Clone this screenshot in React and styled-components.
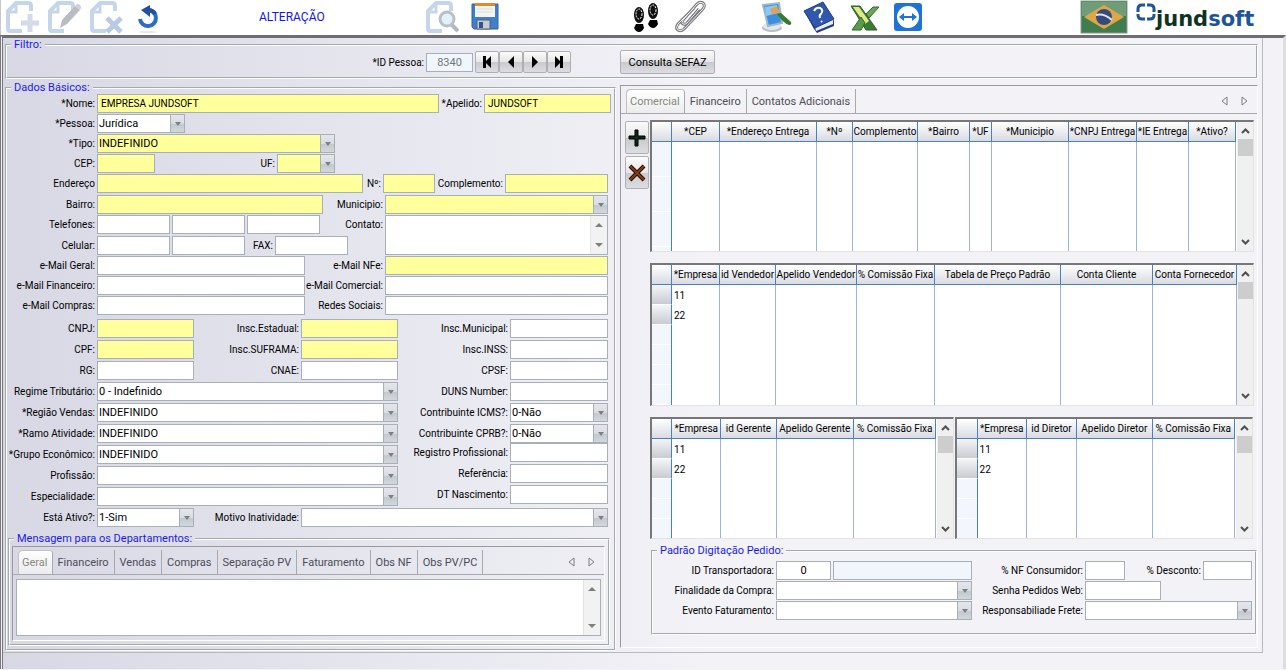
import React from "react";
import styled, { createGlobalStyle } from "styled-components";

const FONT = `Roboto, "Liberation Sans", sans-serif`;
const SMALL = 10;
const LARGE = 11;

const App = () => {
    return (
        <>
            <GlobalStyle />
            <Toolbar />
            <Workspace>
                <Sheet>
                    <FilterBar />
                    <Columns>
                        <BasicData />
                        <SidePanel />
                    </Columns>
                </Sheet>
            </Workspace>
        </>
    );
};

export default App;

/* toolbar */

const Toolbar = () => (
    <ToolbarContainer>
        <IconBtn aria-label="Novo" $ml={5}>
            <PageIcon>
                <path d="M24 14v18M15 23h18" stroke="#d3dae8" strokeWidth="5" />
            </PageIcon>
        </IconBtn>
        <IconBtn aria-label="Editar" $ml={9}>
            <PageIcon>
                <path d="M12 28l2-8L27 6l5 4-13 14z" fill="#b9bcc2" />
                <path d="M27 6l2-2q4 0 4 4l-1 2z" fill="#cdd0d5" />
            </PageIcon>
        </IconBtn>
        <IconBtn aria-label="Excluir" $ml={9}>
            <PageIcon>
                <path d="M17 18l14 14M31 18L17 32" stroke="#b9cbe4" strokeWidth="5" />
            </PageIcon>
        </IconBtn>
        <IconBtn aria-label="Desfazer" $ml={8}>
            <svg width="33" height="34" viewBox="0 0 33 34">
                <ellipse cx="17" cy="32" rx="9" ry="1" fill="#e6e6e6" />
                <path
                    d="M17 10a8 8 0 1 1-8 9"
                    fill="none"
                    stroke="#2a6cc9"
                    strokeWidth="4"
                />
                <path d="M10 10l9-5v12z" fill="#234fa3" />
                <path d="M17 10q5 0 7 4" fill="none" stroke="#234fa3" strokeWidth="4" />
            </svg>
        </IconBtn>
        <Mode>ALTERAÇÃO</Mode>
        <IconBtn aria-label="Pesquisar" $ml={103}>
            <PageIcon>
                <circle cx="21" cy="19" r="7" fill="#e3f1fa" stroke="#b9c0c8" strokeWidth="3" />
                <path d="M26 25l6 6" stroke="#b5b8bf" strokeWidth="4" />
            </PageIcon>
        </IconBtn>
        <IconBtn aria-label="Salvar" $ml={9}>
            <svg width="33" height="34" viewBox="0 0 33 34">
                <path d="M4 4h26v25H6l-2-2z" fill="#3f7fcd" stroke="#2c62ab" />
                <path d="M7 3h20v3H7z" fill="#e08a2c" />
                <path d="M7 6h20v11H7z" fill="#f4f4f2" />
                <path d="M9 9h16M9 12h16" stroke="#dcdcda" />
                <path d="M9 20h13v9H9z" fill="#c9ccd2" stroke="#56607a" />
                <path d="M11 22h4v6h-4z" fill="#33518c" />
            </svg>
        </IconBtn>
        <IconBtn aria-label="Seguir" $ml={131}>
            <svg width="33" height="34" viewBox="0 0 33 34">
                <Foot />
                <g transform="translate(14 -4)">
                    <Foot />
                </g>
            </svg>
        </IconBtn>
        <IconBtn aria-label="Anexos" $ml={8}>
            <svg width="33" height="34" viewBox="0 0 33 34" fill="none">
                <path
                    d="M21 8L5 24q-3 4 0 6 3 2 6-1L29 10q4-4 1-7-3-2-6 1L10 20q-2 3 0 4 2 1 4-1L26 9"
                    stroke="#77797d"
                    strokeWidth="3"
                />
                <path
                    d="M21 8L5 24q-3 4 0 6 3 2 6-1L29 10q4-4 1-7-3-2-6 1L10 20q-2 3 0 4 2 1 4-1L26 9"
                    stroke="#f2f2f4"
                />
            </svg>
        </IconBtn>
        <IconBtn aria-label="Aparência" $ml={54}>
            <svg width="33" height="34" viewBox="0 0 33 34">
                <ellipse cx="12" cy="28" rx="10" ry="4" fill="#b9bfc6" />
                <ellipse cx="12" cy="26" rx="9" ry="4" fill="#e3e7ea" />
                <path d="M3 5l16-2 3 20-14 3z" fill="#3d8fdc" stroke="#9cb8cf" strokeWidth="2" />
                <path d="M5 7l12-2 1 8-12 3z" fill="#8cc8f4" />
                <path d="M10 9l7-3 3 7-8 1z" fill="#e0a457" />
                <path d="M17 14l4-1 10 9q1 3-2 3-6-2-12-11z" fill="#3a7a2d" />
            </svg>
        </IconBtn>
        <IconBtn aria-label="Ajuda" $ml={10}>
            <svg width="33" height="34" viewBox="0 0 33 34">
                <path d="M1 11l10 18 3 4 17-7v-6L12 27z" fill="#23407f" />
                <path d="M12 27l18-7v4l-17 7z" fill="#e8ebf2" />
                <path d="M1 11L20 2l11 17-19 9z" fill="#2f57ad" stroke="#203c7c" />
                <path
                    d="M11 11q2-4 6-3 4 2 1 6-2 1-1 4M18 21l1 1"
                    fill="none"
                    stroke="#fff"
                    strokeWidth="2"
                />
            </svg>
        </IconBtn>
        <IconBtn aria-label="Exportar para Excel" $ml={14}>
            <svg width="33" height="34" viewBox="0 0 33 34">
                <path d="M16 14l7-7h6L19 18z" fill="#6aa554" stroke="#2e6b2b" />
                <path d="M1 6h9l17 24H16z" fill="#3b7c34" stroke="#2b5f28" />
                <path d="M3 7h6l10 14-4 3z" fill="#dfe98a" />
                <path d="M11 17L2 30h9l4-7z" fill="#5b9a49" stroke="#2e6b2b" />
            </svg>
        </IconBtn>
        <IconBtn aria-label="Suporte remoto" $ml={8}>
            <svg width="33" height="34" viewBox="0 0 33 34">
                <rect x="3" y="3" width="28" height="28" rx="3" fill="#1f72d6" />
                <circle cx="17" cy="17" r="11" fill="#fff" />
                <path d="M8 17l5-4v3h8v-3l5 4-5 4v-3h-8v3z" fill="#1f72d6" />
            </svg>
        </IconBtn>
        <Brand>
            <svg width="48" height="34" viewBox="0 0 48 34" role="img" aria-label="Brasil">
                <rect x="1" y="1" width="46" height="32" fill="#3f7d4f" stroke="#8d9a8f" />
                <path d="M2 2h44v14H2z" fill="#6f9d78" />
                <path d="M4 17L24 5l20 12-20 12z" fill="#e2a545" />
                <circle cx="24" cy="17" r="8" fill="#35497f" />
                <path d="M16 15q8-2 16 5" fill="none" stroke="#dfe4ea" strokeWidth="2" />
            </svg>
            <Logo>
                <svg width="20" height="26" viewBox="0 0 20 26" fill="none" stroke="#1f5597" strokeWidth="3">
                    <path d="M9 5H6Q2 5 2 9v3M11 5h3q4 0 4 4v3M2 14v1q0 4 4 4h3M18 14v1q0 4-4 4h-3" />
                </svg>
                <LogoText>
                    jund<b>soft</b>
                </LogoText>
            </Logo>
        </Brand>
    </ToolbarContainer>
);

const PageIcon = ({ children }) => (
    <svg width="33" height="34" viewBox="0 0 33 34" fill="none">
        <path
            d="M16 31H4q-2 0-2-2V11l8-8h12q3 0 3 3v5"
            stroke="#c5d5ea"
            strokeWidth="4"
        />
        <path d="M2 12h8V3" stroke="#c5d5ea" strokeWidth="3" />
        {children}
    </svg>
);

const Foot = () => (
    <g>
        <ellipse cx="7" cy="15" rx="5" ry="8" fill="#111" />
        <ellipse cx="7" cy="14" rx="3" ry="5" fill="none" stroke="#fff" strokeDasharray="2 1" />
        <path d="M4 24h7l1 4q-2 4-5 4t-5-4z" fill="#000" />
    </g>
);

/* filter */

const navIcons = [
    ["Primeiro", "M4 2h3v5l5-5v12L7 9v5H4z"],
    ["Anterior", "M11 2v12L5 8z"],
    ["Próximo", "M5 2v12l6-6z"],
    ["Último", "M12 2H9v5L4 2v12l5-5v5h3z"],
];

const FilterBar = () => (
    <Fieldset>
        <Legend>Filtro:</Legend>
        <FilterRow>
            <Label htmlFor="idPessoa" $w={417}>
                *ID Pessoa:
            </Label>
            <Input id="idPessoa" $w={47} $center $readonly readOnly defaultValue="8340" />
            <NavGroup>
                {navIcons.map(([name, d]) => (
                    <GreyBtn key={name} aria-label={name} $w={24} $h={22}>
                        <svg width="16" height="16" viewBox="0 0 16 16">
                            <path d={d} />
                        </svg>
                    </GreyBtn>
                ))}
            </NavGroup>
            <SefazBtn>Consulta SEFAZ</SefazBtn>
        </FilterRow>
    </Fieldset>
);

/* form parts */

const Text = ({ id, label, lw = 88, ...rest }) => (
    <>
        <Label htmlFor={id} $w={lw}>
            {label}
        </Label>
        <Input id={id} {...rest} />
    </>
);

const Drop = ({ id, label, lw = 88, value = "", w, yellow, grow }) => (
    <>
        <Label htmlFor={id} $w={lw}>
            {label}
        </Label>
        <SelectBox $w={w} $yellow={yellow} $grow={grow}>
            <Select id={id} defaultValue={value}>
                <option value={value}>{value}</option>
            </Select>
            <Arrow aria-hidden="true">
                <svg width="6" height="4" viewBox="0 0 6 4">
                    <path d="M0 0h6L3 4z" fill="#7b7f86" />
                </svg>
            </Arrow>
        </SelectBox>
    </>
);

const Area = ({ name, ...rest }) => (
    <AreaBox>
        <TextArea {...rest} aria-label={name} />
        <AreaScroll aria-hidden="true">
            <svg width="8" height="4" viewBox="0 0 8 4">
                <path d="M0 4h8L4 0z" fill="#7f7f7f" />
            </svg>
            <svg width="8" height="4" viewBox="0 0 8 4">
                <path d="M0 0h8L4 4z" fill="#7f7f7f" />
            </svg>
        </AreaScroll>
    </AreaBox>
);

const BasicData = () => (
    <Fieldset>
        <Legend>Dados Básicos:</Legend>
        <Form>
            <Rows $gap={1}>
                <Row $pr={3}>
                    <Text id="nome" label="*Nome:" $w={342} $yellow $grow defaultValue="EMPRESA JUNDSOFT" />
                    <Text id="apelido" label="*Apelido:" lw={41} $w={127} $yellow defaultValue="JUNDSOFT" />
                </Row>
                <Row>
                    <Drop id="pessoa" label="*Pessoa:" value="Jurídica" w={88} />
                </Row>
                <Row>
                    <Drop id="tipo" label="*Tipo:" value="INDEFINIDO" w={238} yellow />
                </Row>
                <Row>
                    <Text id="cep" label="CEP:" $w={58} $yellow />
                    <Drop id="uf" label="UF:" lw={118} w={58} yellow />
                </Row>
            </Rows>
            <Rows $gap={2} $mt={1}>
                <Row $pr={6}>
                    <Text id="endereco" label="Endereço" $w={266} $yellow $grow />
                    <Text id="numero" label="Nº:" lw={16} $w={52} $yellow />
                    <Text id="complemento" label="Complemento:" lw={66} $w={103} $yellow />
                </Row>
                <Row $pr={6}>
                    <Text id="bairro" label="Bairro:" $w={226} $yellow />
                    <Drop id="municipio" label="Municipio:" lw={58} w={223} yellow grow />
                </Row>
            </Rows>
            <Contact>
                <Rows $gap={2}>
                    <Row>
                        <Text id="tel1" label="Telefones:" $w={73} />
                        <Input aria-label="Telefone 2" $w={73} />
                        <Input aria-label="Telefone 3" $w={73} />
                    </Row>
                    <Row>
                        <Text id="cel1" label="Celular:" $w={73} />
                        <Input aria-label="Celular 2" $w={73} />
                        <Text id="fax" label="FAX:" lw={26} $w={73} />
                    </Row>
                </Rows>
                <Label htmlFor="contato">Contato:</Label>
                <Area id="contato" />
            </Contact>
            <Rows $gap={1} $mt={1}>
                <Row $pr={6}>
                    <Text id="mailGeral" label="e-Mail Geral:" $w={208} />
                    <Text id="mailNfe" label="e-Mail NFe:" lw={76} $w={222} $yellow $grow />
                </Row>
                <Row $pr={6}>
                    <Text id="mailFin" label="e-Mail Financeiro:" $w={208} />
                    <Text id="mailCom" label="e-Mail Comercial:" lw={76} $w={222} $grow />
                </Row>
                <Row $pr={6}>
                    <Text id="mailCompras" label="e-Mail Compras:" $w={208} />
                    <Text id="redes" label="Redes Sociais:" lw={76} $w={222} $grow />
                </Row>
            </Rows>
            <Documents>
                <Rows $gap={2}>
                    <Row>
                        <Text id="cnpj" label="CNPJ:" $w={97} $yellow />
                        <Text id="ie" label="Insc.Estadual:" lw={103} $w={97} $yellow />
                    </Row>
                    <Row>
                        <Text id="cpf" label="CPF:" $w={97} $yellow />
                        <Text id="suframa" label="Insc.SUFRAMA:" lw={103} $w={97} $yellow />
                    </Row>
                    <Row>
                        <Text id="rg" label="RG:" $w={97} />
                        <Text id="cnae" label="CNAE:" lw={103} $w={97} />
                    </Row>
                    <Row>
                        <Drop id="regime" label="Regime Tributário:" value="0 - Indefinido" w={301} />
                    </Row>
                    <Row>
                        <Drop id="regiao" label="*Região Vendas:" value="INDEFINIDO" w={301} />
                    </Row>
                    <Row>
                        <Drop id="ramo" label="*Ramo Atividade:" value="INDEFINIDO" w={301} />
                    </Row>
                    <Row>
                        <Drop id="grupo" label="*Grupo Econômico:" value="INDEFINIDO" w={301} />
                    </Row>
                    <Row>
                        <Drop id="profissao" label="Profissão:" w={301} />
                    </Row>
                    <Row>
                        <Drop id="especialidade" label="Especialidade:" w={301} />
                    </Row>
                </Rows>
                <div>
                    <Rows $gap={2}>
                        <Row $pr={6}>
                            <Text id="im" label="Insc.Municipal:" lw={108} $w={97} $grow />
                        </Row>
                        <Row $pr={6}>
                            <Text id="inss" label="Insc.INSS:" lw={108} $w={97} $grow />
                        </Row>
                        <Row $pr={6}>
                            <Text id="cpsf" label="CPSF:" lw={108} $w={97} $grow />
                        </Row>
                        <Row $pr={6}>
                            <Text id="duns" label="DUNS Number:" lw={108} $w={97} $grow />
                        </Row>
                        <Row $pr={6}>
                            <Drop id="icms" label="Contribuinte ICMS?:" value="0-Não" lw={108} w={97} grow />
                        </Row>
                        <Row $pr={6}>
                            <Drop id="cprb" label="Contribuinte CPRB?:" value="0-Não" lw={108} w={97} grow />
                        </Row>
                    </Rows>
                    <Rows $gap={2}>
                        <Row $pr={6}>
                            <Text id="registro" label="Registro Profissional:" lw={108} $w={97} $grow />
                        </Row>
                        <Row $pr={6}>
                            <Text id="referencia" label="Referência:" lw={108} $w={97} $grow />
                        </Row>
                        <Row $pr={6}>
                            <Text id="nascimento" label="DT Nascimento:" lw={108} $w={97} $grow />
                        </Row>
                    </Rows>
                </div>
            </Documents>
            <Rows $gap={2} $mt={2}>
                <Row $pr={6}>
                    <Drop id="ativo" label="Está Ativo?:" value="1-Sim" w={97} />
                    <Drop id="motivo" label="Motivo Inatividade:" lw={103} w={306} grow />
                </Row>
            </Rows>
        </Form>
        <Messages>
            <Legend>Mensagem para os Departamentos:</Legend>
            <TabPanel>
                <TabStrip
                    tabs={[
                        "Geral",
                        "Financeiro",
                        "Vendas",
                        "Compras",
                        "Separação PV",
                        "Faturamento",
                        "Obs NF",
                        "Obs PV/PC",
                    ]}
                />
                <MessageBody>
                    <Area name="Mensagem" />
                </MessageBody>
            </TabPanel>
        </Messages>
    </Fieldset>
);

const TabStrip = ({ tabs }) => (
    <Tabs role="tablist">
        {tabs.map((tab, i) => (
            <Tab key={tab} role="tab" aria-selected={i === 0} $active={i === 0}>
                {tab}
            </Tab>
        ))}
        <TabArrows>
            <ArrowBtn aria-label="Aba anterior">
                <svg width="7" height="10" viewBox="0 0 7 10">
                    <path d="M6 1v8L1 5z" fill="none" stroke="#7d7d80" />
                </svg>
            </ArrowBtn>
            <ArrowBtn aria-label="Próxima aba">
                <svg width="7" height="10" viewBox="0 0 7 10">
                    <path d="M1 1v8l5-4z" fill="none" stroke="#7d7d80" />
                </svg>
            </ArrowBtn>
        </TabArrows>
    </Tabs>
);

/* side panel */

const deliveryCols = [
    ["*CEP", 48],
    ["*Endereço Entrega", 97],
    ["*Nº", 36],
    ["Complemento", 65],
    ["*Bairro", 52],
    ["*UF", 22],
    ["*Municipio", 77],
    ["*CNPJ Entrega", 68],
    ["*IE Entrega", 52],
    ["*Ativo?", 47],
];

const sellerCols = [
    ["*Empresa", 48],
    ["id Vendedor", 56],
    ["Apelido Vendedor", 81],
    ["% Comissão Fixa", 78],
    ["Tabela de Preço Padrão", 126],
    ["Conta Cliente", 92],
    ["Conta Fornecedor", 84],
];

const managerCols = [
    ["*Empresa", 49],
    ["id Gerente", 55],
    ["Apelido Gerente", 77],
    ["% Comissão Fixa", 82],
];

const directorCols = [
    ["*Empresa", 49],
    ["id Diretor", 50],
    ["Apelido Diretor", 75],
    ["% Comissão Fixa", 82],
];

const DataGrid = ({ cols, rows = [], height, pitch = 20, grow }) => (
    <GridFrame $h={height} $grow={grow}>
        <TableWrap>
            <Table>
                <colgroup>
                    <col width={20} />
                    {cols.map(([name, w]) => (
                        <col key={name} width={w} />
                    ))}
                </colgroup>
                <thead>
                    <tr>
                        <HeadCell />
                        {cols.map(([name]) => (
                            <HeadCell key={name}>{name}</HeadCell>
                        ))}
                    </tr>
                </thead>
                <tbody>
                    {rows.map((value) => (
                        <tr key={value}>
                            <RowHandle />
                            {cols.map(([name], i) => (
                                <Cell key={name}>{i === 0 ? value : ""}</Cell>
                            ))}
                        </tr>
                    ))}
                    <FillRow>
                        <FillHandle $pitch={pitch} />
                        {cols.map(([name]) => (
                            <Cell key={name} />
                        ))}
                    </FillRow>
                </tbody>
            </Table>
        </TableWrap>
        <ScrollBar aria-hidden="true">
            <svg width="9" height="6" viewBox="0 0 9 6">
                <path d="M1 5l3.500-3.500L8 5" fill="none" stroke="#505050" strokeWidth="2" />
            </svg>
            <Thumb />
            <svg width="9" height="6" viewBox="0 0 9 6">
                <path d="M1 1l3.500 3.500L8 1" fill="none" stroke="#505050" strokeWidth="2" />
            </svg>
        </ScrollBar>
    </GridFrame>
);

const SidePanel = () => (
    <SidePanelContainer>
        <TabStrip tabs={["Comercial", "Financeiro", "Contatos Adicionais"]} />
        <SideBody>
            <SideButtons>
                <GreyBtn aria-label="Adicionar" $w={24} $h={33}>
                    <svg width="18" height="18" viewBox="0 0 18 18">
                        <path d="M7 1h3v6h7v3h-7v7H7v-7H1V7h6z" fill="#0d2a16" stroke="#000" />
                    </svg>
                </GreyBtn>
                <GreyBtn aria-label="Remover" $w={24} $h={33}>
                    <svg width="18" height="18" viewBox="0 0 18 18">
                        <path d="M2 2l14 14M16 2L2 16" stroke="#1a0d06" strokeWidth="4" />
                        <path d="M2 2l14 14M16 2L2 16" stroke="#8a3a0c" strokeWidth="2" />
                    </svg>
                </GreyBtn>
            </SideButtons>
            <GridStack>
                <DataGrid cols={deliveryCols} height={132} pitch={35} />
                <DataGrid cols={sellerCols} rows={["11", "22"]} height={143} />
                <GridPair>
                    <DataGrid cols={managerCols} rows={["11", "22"]} height={122} grow={304} />
                    <DataGrid cols={directorCols} rows={["11", "22"]} height={122} grow={297} />
                </GridPair>
            </GridStack>
        </SideBody>
        <OrderDefaults />
    </SidePanelContainer>
);

const OrderDefaults = () => (
    <OrderFieldset>
        <Legend>Padrão Digitação Pedido:</Legend>
        <OrderRows>
            <Row $pr={3}>
                <Text id="transportadora" label="ID Transportadora:" lw={121} $w={55} $center defaultValue="0" />
                <Input aria-label="Transportadora" $w={139} $readonly readOnly />
                <Text id="nfConsumidor" label="% NF Consumidor:" lw={109} $w={40} />
                <Text id="desconto" label="% Desconto:" lw={74} $w={48} $grow />
            </Row>
            <Row $pr={3}>
                <Drop id="finalidade" label="Finalidade da Compra:" lw={121} w={196} />
                <Text id="senha" label="Senha Pedidos Web:" lw={109} $w={76} />
            </Row>
            <Row $pr={3}>
                <Drop id="evento" label="Evento Faturamento:" lw={121} w={196} />
                <Drop id="frete" label="Responsabiliade Frete:" lw={109} w={164} grow />
            </Row>
        </OrderRows>
    </OrderFieldset>
);

/* styles */

const GlobalStyle = createGlobalStyle`
    * {
        box-sizing: border-box;
    }
    body {
        margin: 0;
        font-family: ${FONT};
        font-size: ${SMALL}px;
        color: #000;
        background: #f2f2f7;
    }
    button, input, select, textarea {
        font-family: inherit;
    }
    svg {
        display: block;
    }
`;

const ToolbarContainer = styled.header`
    height: 35px;
    display: flex;
    align-items: flex-start;
    background: #fff;
    border-left: 1px solid #c8c8c8;
`;

const IconBtn = styled.button`
    margin: 0 0 0 ${({ $ml }) => $ml}px;
    padding: 0;
    border: none;
    background: none;
    flex-shrink: 0;
`;

const Mode = styled.span`
    width: 64px;
    margin-left: 95px;
    line-height: 34px;
    font-size: 12px;
    white-space: nowrap;
    color: #1414f0;
`;

const Brand = styled.div`
    display: flex;
    gap: 8px;
    margin-left: auto;
    margin-right: 30px;
`;

const Logo = styled.div`
    display: flex;
`;

const LogoText = styled.span`
    width: 100px;
    font-family: "DejaVu Sans", sans-serif;
    font-weight: bold;
    font-size: 21px;
    line-height: 38px;
    color: #0d3420;

    & b {
        color: #1f5597;
    }
`;

const Workspace = styled.main`
    min-height: calc(100vh - 36px);
    padding-right: 20px;
    border-top: 3px solid #6e6e70;
    border-left: 3px double #77777b;
    border-right: 3px solid #dedee2;
    background: linear-gradient(90deg, #d8d8e5, #f2f2f7 55%);
`;

const Sheet = styled.div`
    padding: 2px 4px 1px 2px;
    border-right: 1px solid #b9b9bd;
    border-bottom: 1px solid #b9b9bd;
`;

const Fieldset = styled.fieldset`
    min-width: 0;
    margin: 0;
    padding: 0;
    border: 2px groove #f8fdfe;
`;

const Legend = styled.legend`
    margin-left: 4px;
    padding: 0 3px;
    line-height: 10px;
    font-size: ${LARGE}px;
    color: #1a1af0;
`;

const FilterRow = styled.div`
    height: 27px;
    display: flex;
    align-items: center;
    gap: 2px;
    padding-bottom: 3px;
`;

const NavGroup = styled.div`
    display: flex;
`;

const GreyBtn = styled.button`
    width: ${({ $w }) => $w}px;
    height: ${({ $h }) => $h}px;
    display: flex;
    align-items: center;
    justify-content: center;
    padding: 0;
    border: 1px solid #b0b0b4;
    border-radius: 2px;
    background: linear-gradient(#fbfbfb, #e6e6e8 50%, #c9cacd 51%, #dcdde0);
`;

const SefazBtn = styled(GreyBtn)`
    width: 95px;
    height: 24px;
    margin-left: 47px;
    font-size: ${LARGE}px;
    white-space: nowrap;
`;

const Columns = styled.div`
    display: grid;
    grid-template-columns: minmax(0, 611fr) minmax(0, 638fr);
    gap: 4px;
    margin-top: 4px;
`;

const Form = styled.div`
    padding-top: 1px;
`;

const Rows = styled.div`
    display: flex;
    flex-direction: column;
    gap: ${({ $gap }) => $gap}px;
    margin-top: ${({ $mt = 0 }) => $mt}px;
`;

const Row = styled.div`
    height: 19px;
    display: flex;
    align-items: center;
    gap: 2px;
    padding-right: ${({ $pr = 0 }) => $pr}px;
`;

const Label = styled.label`
    flex-shrink: 0;
    width: ${({ $w }) => ($w ? `${$w}px` : "auto")};
    display: flex;
    justify-content: flex-end;
    line-height: 19px;
    font-size: ${SMALL}px;
    white-space: nowrap;
`;

const fieldColor = ({ $yellow, $readonly }) =>
    $yellow ? "#ffff9c" : $readonly ? "#f1f5fc" : "#fff";

const Input = styled.input`
    flex: ${({ $grow }) => ($grow ? 1 : 0)} 1 ${({ $w }) => $w}px;
    width: ${({ $w }) => $w}px;
    min-width: 0;
    height: 19px;
    padding: 0 3px;
    border: 1px solid #a7afb8;
    border-radius: 0;
    background: ${fieldColor};
    font-size: ${({ $center }) => ($center ? LARGE : SMALL)}px;
    text-align: ${({ $center }) => ($center ? "center" : "left")};
    color: ${({ $readonly }) => ($readonly ? "#6f7a78" : "#000")};
`;

const SelectBox = styled.div`
    position: relative;
    flex: ${({ $grow }) => ($grow ? 1 : 0)} 1 ${({ $w }) => $w}px;
    min-width: 0;
    height: 19px;
    border: 1px solid #a7afb8;
    background: ${fieldColor};
`;

const Select = styled.select`
    appearance: none;
    display: block;
    width: 100%;
    height: 17px;
    padding: 0 14px 0 1px;
    border: none;
    background: none;
    font-size: ${LARGE}px;
    color: #000;
`;

const Arrow = styled.span`
    position: absolute;
    top: 0;
    right: 0;
    bottom: 0;
    width: 14px;
    display: flex;
    align-items: center;
    justify-content: center;
    border-left: 1px solid #a7afb8;
    background: linear-gradient(#e4e6ea, #d9dce1 50%, #c3c7cd 51%, #d2d8da);
    pointer-events: none;
`;

const Contact = styled.div`
    display: grid;
    grid-template-columns: 341px 33px minmax(0, 1fr);
    gap: 2px;
    margin-top: 1px;
    padding-right: 6px;
`;

const AreaBox = styled.div`
    display: flex;
    height: 100%;
    border: 1px solid #a7afb8;
    background: #fff;
`;

const TextArea = styled.textarea`
    flex: 1;
    min-width: 0;
    height: 100%;
    padding: 2px;
    border: none;
    background: none;
    resize: none;
    overflow: hidden;
    font-size: ${LARGE}px;
`;

const AreaScroll = styled.div`
    width: 17px;
    display: flex;
    flex-direction: column;
    align-items: center;
    justify-content: space-between;
    padding: 7px 0;
    border-left: 1px solid #e4e4e4;
    background: #f2f2f2;
`;

const Documents = styled.div`
    display: grid;
    grid-template-columns: 391px minmax(0, 1fr);
    gap: 2px;
    margin-top: 4px;
`;

const Messages = styled(Fieldset)`
    margin: 7px 4px 3px 1px;
`;

const TabPanel = styled.div`
    margin: 2px 3px 3px 2px;
    border-top: 1px solid #9a9a9e;
    border-left: 1px solid #9a9a9e;
    border-right: 1px solid #fff;
    border-bottom: 1px solid #fff;
`;

const Tabs = styled.div`
    height: 28px;
    display: flex;
    align-items: stretch;
    padding: 3px 0 0 5px;
    border-bottom: 1px solid #a9a9ac;
`;

const Tab = styled.button`
    padding: 0 ${({ $active }) => ($active ? 4 : 5)}px;
    border: none;
    border-right: 1px solid #a9a9ac;
    border-radius: ${({ $active }) => ($active ? "4px 4px 0 0" : 0)};
    background: ${({ $active }) =>
        $active ? "linear-gradient(#fff, #ececee)" : "none"};
    box-shadow: ${({ $active }) => ($active ? "inset 1px 1px #c2c2c6" : "none")};
    font-size: ${LARGE}px;
    white-space: nowrap;
    color: ${({ $active }) => ($active ? "#85887c" : "#4c4c55")};
`;

const TabArrows = styled.div`
    display: flex;
    align-items: center;
    gap: 13px;
    margin-left: auto;
    padding-right: 9px;
`;

const ArrowBtn = styled.button`
    padding: 0;
    border: none;
    background: none;
`;

const MessageBody = styled.div`
    height: 65px;
    padding: 4px 3px;
`;

const SidePanelContainer = styled.section`
    margin: 2px 0 3px;
    border-top: 1px solid #9a9a9e;
    border-left: 1px solid #9a9a9e;
    border-right: 1px solid #fff;
    border-bottom: 1px solid #fff;
`;

const SideBody = styled.div`
    display: flex;
    gap: 1px;
    padding: 6px 3px 0 4px;
`;

const SideButtons = styled.div`
    display: flex;
    flex-direction: column;
    gap: 2px;
    padding-top: 1px;
`;

const GridStack = styled.div`
    flex: 1;
    min-width: 0;
    display: flex;
    flex-direction: column;
    gap: 11px;
`;

const GridPair = styled.div`
    display: flex;
    gap: 1px;
    padding-right: 1px;
`;

const GridFrame = styled.div`
    flex: ${({ $grow }) => ($grow ? `${$grow} 1 0` : "none")};
    min-width: 0;
    height: ${({ $h }) => $h}px;
    display: flex;
    gap: 1px;
    border: 2px solid #77777b;
    border-right: 1px solid #e3e3e6;
    border-bottom: 1px solid #e3e3e6;
    background: #fff;
`;

const TableWrap = styled.div`
    flex: 1;
    min-width: 0;
`;

const Table = styled.table`
    width: 100%;
    height: 100%;
    table-layout: fixed;
    border-spacing: 0;
`;

const HeadCell = styled.th`
    height: 20px;
    padding: 0;
    border-right: 1px solid #4a7fc4;
    border-bottom: 1px solid #4a7fc4;
    background: linear-gradient(#fff, #d9dbe2);
    font-size: ${SMALL}px;
    font-weight: normal;
    line-height: 19px;
    white-space: nowrap;
`;

const Cell = styled.td`
    height: 20px;
    padding: 0 2px;
    border-right: 1px solid #9ab4dc;
    font-size: ${SMALL}px;
`;

const RowHandle = styled.td`
    padding: 0;
    border-right: 1px solid #4a7fc4;
    border-bottom: 1px solid #fff;
    background: linear-gradient(#f4f5f7, #c9cbd1);
`;

const FillRow = styled.tr`
    height: 100%;
`;

const FillHandle = styled.td`
    padding: 0;
    border-right: 1px solid #4a7fc4;
    background: repeating-linear-gradient(
        #f3f7fd 0 ${({ $pitch }) => $pitch - 1}px,
        #fff ${({ $pitch }) => $pitch - 1}px ${({ $pitch }) => $pitch}px
    );
`;

const ScrollBar = styled.div`
    width: 16px;
    display: flex;
    flex-direction: column;
    align-items: center;
    padding: 6px 0;
    background: #f0f0f0;

    & svg:last-child {
        margin-top: auto;
    }
`;

const Thumb = styled.span`
    width: 15px;
    height: 17px;
    margin-top: 5px;
    background: #cdcdcd;
`;

const OrderFieldset = styled(Fieldset)`
    margin: 7px 0 11px 30px;
`;

const OrderRows = styled.div`
    display: flex;
    flex-direction: column;
    gap: 1px;
    padding: 5px 0 13px;
`;
